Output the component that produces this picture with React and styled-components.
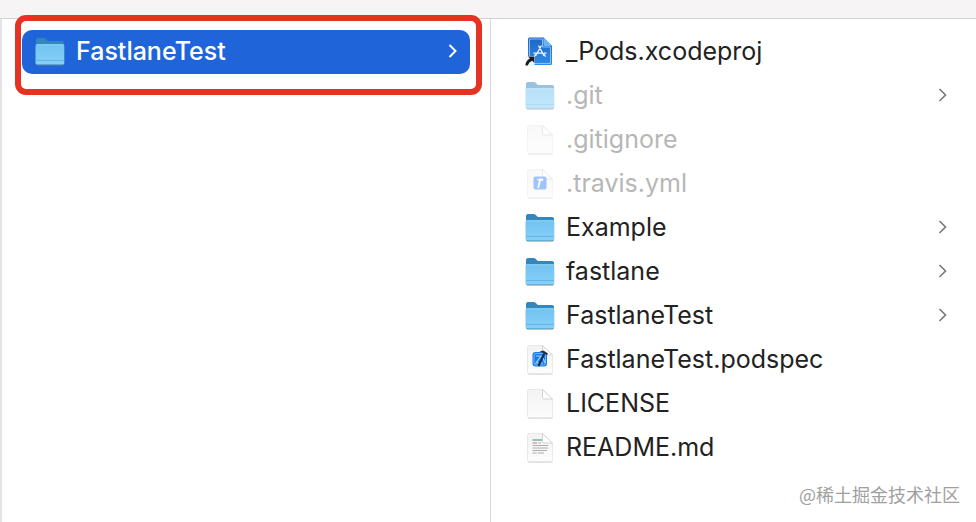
import React from "react";
import styled, { createGlobalStyle } from "styled-components";

const GlobalStyle = createGlobalStyle`
  * { box-sizing: border-box; }
  html, body, #root { height: 100%; margin: 0; }
  body {
    background: #fff;
    color: #262626;
    font-family: Inter, "Noto Sans CJK SC", sans-serif;
  }
`;

const Window = styled.div`
  position: relative;
  display: flex;
  flex-direction: column;
  min-height: 100%;
  overflow: hidden;
`;

const TitleBar = styled.header`
  height: 19px;
  flex: none;
  background: #f7f4f6;
  border-bottom: 1px solid #d2d0d1;
`;

const Columns = styled.main`
  flex: 1;
  display: grid;
  grid-template-columns: 491fr 485fr;
`;

const Column = styled.ul`
  list-style: none;
  margin: 0;
  padding: ${(p) => (p.$parent ? "11px 20px 0 20px" : "10px 16px 0 20px")};
  border-left: ${(p) => (p.$parent ? "2px solid #e4e4e4" : "0")};
  border-right: ${(p) => (p.$parent ? "1px solid #d9d9d9" : "0")};
`;

const Item = styled.li`
  position: relative;
`;

const Row = styled.button`
  display: flex;
  align-items: center;
  gap: 10px;
  width: 100%;
  height: 44px;
  padding: ${(p) => (p.$selected ? "0 12px 2px 12px" : "0 12px 0 13px")};
  border: 0;
  border-radius: 10px;
  background: ${(p) => (p.$selected ? "#1f65d9" : "transparent")};
  color: ${(p) => (p.$selected ? "#fff" : p.$hidden ? "#b7b7b7" : "#222")};
  font: inherit;
  font-size: 25px;
  font-weight: ${(p) => (p.$selected ? 500 : 400)};
  line-height: 32px;
  text-align: left;
`;

const Name = styled.span`
  flex: 1;
  white-space: nowrap;
`;

const Icon = styled.svg`
  flex: none;
  width: 32px;
  height: 32px;
  opacity: ${(p) => (p.$hidden ? 0.5 : 1)};
`;

const Arrow = styled.svg`
  flex: none;
  width: 10px;
  height: 16px;
  fill: none;
  stroke: ${(p) => (p.$selected ? "#fff" : "#7c7c7c")};
  stroke-width: ${(p) => (p.$selected ? 2 : 1.7)};
`;

const Highlight = styled.div`
  position: absolute;
  inset: -15px -12px -21px -7px;
  border: 6px solid #e53323;
  border-radius: 11px;
  pointer-events: none;
`;

const Watermark = styled.div`
  position: absolute;
  right: 16px;
  bottom: 16px;
  color: #a0a0a0;
  font-family: "Noto Sans CJK SC", sans-serif;
  font-size: 18px;
  font-weight: 400;
  line-height: 24px;
`;

const Definitions = styled.svg`
  display: block;
`;

const Chevron = ({ selected }) => (
  <Arrow viewBox="0 0 10 16" $selected={selected} aria-hidden="true">
    <path d="M1.500 2L7.500 8L1.500 14" />
  </Arrow>
);

const Gradients = () => (
  <Definitions width="0" height="0" aria-hidden="true">
    <defs>
      <linearGradient id="folderFront" x1="0" y1="0" x2="0" y2="1">
        <stop offset="0" stopColor="#72c2f0" />
        <stop offset="1" stopColor="#86d0fa" />
      </linearGradient>
      <linearGradient id="paper" x1="0" y1="0" x2="0" y2="1">
        <stop offset="0" stopColor="#f3f3f3" />
        <stop offset="1" stopColor="#fcfcfc" />
      </linearGradient>
      <linearGradient id="project" x1="0" y1="0" x2="0" y2="1">
        <stop offset="0" stopColor="#1d66c4" />
        <stop offset="1" stopColor="#2f8be8" />
      </linearGradient>
    </defs>
  </Definitions>
);

const Folder = () => (
  <>
    <path d="M3 30.300H29" stroke="#6f7d87" strokeOpacity=".6" />
    <path d="M2 5Q2 3 4 3H9.500Q10.800 3 11.800 4L13.800 6H28Q30 6 30 8V14H2Z" fill="#3487bd" />
    <path d="M1.500 11Q1.500 9.300 3 9.300H28.800Q30.300 9.300 30.300 11V28Q30.300 29.800 28.500 29.800H3.300Q1.500 29.800 1.500 28Z" fill="url(#folderFront)" />
    <path d="M2.500 9.800H29.500" stroke="#9bdaf9" strokeWidth=".8" />
    <path d="M2 25.500H30" stroke="#5fafd9" strokeWidth=".8" />
    <path d="M2 29.500H30" stroke="#4d9fcc" strokeWidth=".7" />
  </>
);

const Paper = () => (
  <>
    <path d="M4 31H28.500" stroke="#b5b5b5" strokeWidth=".8" />
    <path d="M3.500 4Q3.500 2.500 5 2.500H18.500L28.500 12.500V29Q28.500 30.500 27 30.500H5Q3.500 30.500 3.500 29Z" fill="url(#paper)" stroke="#e4e4e4" strokeWidth=".8" />
    <path d="M18.500 2.500V10.500Q18.500 12 20 12H28.500Z" fill="#fff" stroke="#cecece" strokeWidth=".9" />
  </>
);

const Project = () => (
  <>
    <path d="M4 4Q4 2.500 5.500 2.500H19.500L28 11V28.500Q28 30 26.500 30H5.500Q4 30 4 28.500Z" fill="url(#project)" />
    <path d="M5.500 4H18.500V12H26.500V28.500H5.500Z" fill="none" stroke="#a6d0fa" strokeWidth=".8" />
    <path d="M19.500 2.500V9.500Q19.500 11 21 11H28Z" fill="#69b5f5" />
    <g fill="none" stroke="#f1f8ff" strokeWidth="1.300" strokeLinecap="round">
      <path d="M14.800 11L19.800 20.500M17.200 11L11.800 20.500M10 18.200H18M20 18.200H22" />
      <path d="M10.500 21.300L11.500 19.500M21.300 21.300L20.300 19.500" />
    </g>
    <path d="M1.500 21H10.500V30.500H1.500Z" fill="#f2f6f9" />
    <path
      d="M4 21.500H10.200V27.700L8.200 25.800Q4.800 27 3.700 30.500H1.400Q1.500 25.800 5.900 23.500Z"
      fill="#171d22"
    />
  </>
);

const Travis = () => (
  <>
    <Paper />
    <rect x="9.500" y="9.500" width="13" height="13" rx="2" fill="#4288fa" />
    <path d="M12.500 12.500Q15.500 11.300 19.500 11.700L19 14L17 13.500L15 21H13.200L15 13.500Z" fill="#fff" />
  </>
);

const Podspec = () => (
  <>
    <Paper />
    <rect x="8.500" y="9" width="14.500" height="14.500" rx="3" fill="#1978ec" />
    <rect x="10" y="10.500" width="11.500" height="11.500" rx="2" fill="none" stroke="#79c1ff" strokeWidth=".9" />
    <path d="M12 13H17L12 20H19M19 15L21 20" fill="none" stroke="#9bd5ff" strokeWidth="1.200" />
    <path d="M14.500 23L20.500 10" stroke="#172c49" strokeWidth="2" />
    <path d="M15.500 8.500L19.500 7.500L24 10.500L23 12L19.500 10Z" fill="#26313f" />
  </>
);

const Readme = () => (
  <>
    <Paper />
    <g fill="none" strokeWidth=".9">
      <path d="M8.500 9H18" stroke="#5d9b91" strokeWidth="1.200" />
      <path d="M8.500 12H13" stroke="#c96878" />
      <path d="M14 12H17M8.500 14.500H24M8.500 17H24M8.500 19.500H23M8.500 22H13M14 22H20" stroke="#a0a5a5" />
    </g>
  </>
);

const artwork = {
  folder: Folder,
  paper: Paper,
  project: Project,
  travis: Travis,
  podspec: Podspec,
  readme: Readme,
};

const files = [
  { name: "_Pods.xcodeproj", icon: "project" },
  { name: ".git", icon: "folder", hidden: true, open: true },
  { name: ".gitignore", icon: "paper", hidden: true },
  { name: ".travis.yml", icon: "travis", hidden: true },
  { name: "Example", icon: "folder", open: true },
  { name: "fastlane", icon: "folder", open: true },
  { name: "FastlaneTest", icon: "folder", open: true },
  { name: "FastlaneTest.podspec", icon: "podspec" },
  { name: "LICENSE", icon: "paper" },
  { name: "README.md", icon: "readme" },
];

function FileRow({ file, selected }) {
  const Artwork = artwork[file.icon];
  return (
    <Row type="button" $selected={selected} $hidden={file.hidden} aria-pressed={selected}>
      <Icon viewBox="0 0 32 32" $hidden={file.hidden} aria-hidden="true">
        <Artwork />
      </Icon>
      <Name>{file.name}</Name>
      {file.open && <Chevron selected={selected} />}
    </Row>
  );
}

export default function App() {
  return (
    <Window>
      <GlobalStyle />
      <Gradients />
      <TitleBar />
      <Columns>
        <Column $parent>
          <Item>
            <FileRow file={{ name: "FastlaneTest", icon: "folder", open: true }} selected />
            <Highlight />
          </Item>
        </Column>
        <Column>
          {files.map((file) => (
            <Item key={file.name}>
              <FileRow file={file} />
            </Item>
          ))}
        </Column>
      </Columns>
      <Watermark>@稀土掘金技术社区</Watermark>
    </Window>
  );
}
